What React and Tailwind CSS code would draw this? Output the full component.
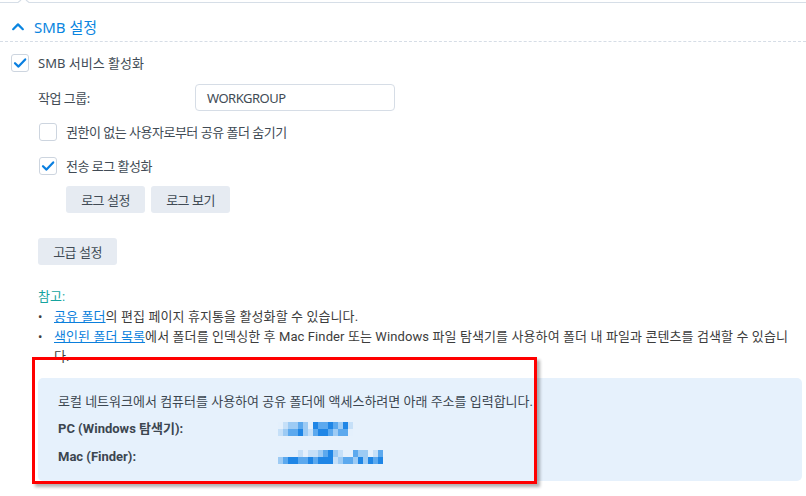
import React from 'react';

const shades = ['#e4f0fc', '#c6e0f8', '#9dcbf4', '#5ca9ee', '#1f86e6'];

// blurred address values, two rows of cells
const pcBlur = ['012232043343241', '123342134432330'];
const macBlur = ['000010112342100322013', '234433434441233242434'];

function Blur({ rows, cell = 5 }) {
  const w = rows[0].length * cell;
  return (
    <svg width={w} height={14} viewBox={`0 0 ${w} 14`}>
      {rows.map((r, y) =>
        r.split('').map((c, x) => (
          <rect key={`${y}-${x}`} x={x * cell} y={y * 7} width={cell} height={7} fill={shades[Number(c)]} />
        ))
      )}
    </svg>
  );
}

function Checkbox({ checked }) {
  return (
    <div className="w-[18px] h-[18px] rounded-[3px] border border-[#cdd5df] bg-white flex items-center justify-center shrink-0">
      {checked && (
        <svg width="14" height="14" viewBox="0 0 14 14">
          <path d="M2 7.2 L5.5 10.6 L12.2 3.4" fill="none" stroke="#0a7fe0" strokeWidth="2.2" strokeLinecap="round" strokeLinejoin="round" />
        </svg>
      )}
    </div>
  );
}

function GrayButton({ children }) {
  return (
    <button className="w-[79px] h-[27px] rounded-[3px] bg-[#e6ebf2] text-[13px] text-[#414b55] flex items-center justify-center">
      {children}
    </button>
  );
}

export default function App() {
  return (
    <div className="w-[806px] h-[496px] bg-white relative overflow-hidden font-['Noto_Sans','Noto_Sans_CJK_KR',sans-serif] text-[13px] leading-[18px] tracking-[-0.5px] text-[#414b55]">
      {/* tab pointer line */}
      <svg width="806" height="8" viewBox="0 0 806 8" className="block">
        <polyline points="0,2.5 18,2.5 21,0" fill="none" stroke="#d6dee7" strokeWidth="1.2" />
        <polyline points="26,0 29,2.5 806,2.5" fill="none" stroke="#d6dee7" strokeWidth="1.2" />
      </svg>

      {/* section header */}
      <div className="h-[34px] pt-[4px] flex items-center pl-[12px] gap-[10px] border-b border-dashed border-[#d6dde6]">
        <svg width="12" height="9" viewBox="0 0 12 9">
          <path d="M1.2 7.2 L6 2.4 L10.8 7.2" fill="none" stroke="#0a85e0" strokeWidth="2.2" strokeLinecap="round" strokeLinejoin="round" />
        </svg>
        <span className="text-[15px] tracking-[0px] text-[#0a85e0]">SMB 설정</span>
      </div>

      <div className="mt-[12px] pl-[11px] flex items-center gap-[9px]">
        <Checkbox checked />
        <span className="tracking-[0px]">SMB 서비스 활성화</span>
      </div>

      <div className="mt-[12px] pl-[38px] flex items-center">
        <span className="w-[157px]">작업 그룹:</span>
        <div className="w-[200px] h-[27px] rounded-[4px] border border-[#d6dde6] flex items-center px-[11px]">WORKGROUP</div>
      </div>

      <div className="mt-[12px] pl-[39px] flex items-center gap-[9px]">
        <Checkbox />
        <span>권한이 없는 사용자로부터 공유 폴더 숨기기</span>
      </div>

      <div className="mt-[16px] pl-[39px] flex items-center gap-[9px]">
        <Checkbox checked />
        <span>전송 로그 활성화</span>
      </div>

      <div className="mt-[11px] pl-[66px] flex gap-[6px]">
        <GrayButton>로그 설정</GrayButton>
        <GrayButton>로그 보기</GrayButton>
      </div>

      <div className="mt-[25px] pl-[38px] flex">
        <GrayButton>고급 설정</GrayButton>
      </div>

      {/* notes */}
      <div className="mt-[22px] pl-[38px] font-['Roboto','Noto_Sans_CJK_KR',sans-serif] tracking-[0.1px] leading-[20px] text-[#3c3c3c]">
        <div className="text-[#16a39e]">참고:</div>
        <div className="flex">
          <span className="w-[16px]">•</span>
          <span>
            <a className="text-[#0b7fdc] underline">공유 폴더</a>의 편집 페이지 휴지통을 활성화할 수 있습니다.
          </span>
        </div>
        <div className="flex">
          <span className="w-[16px] shrink-0">•</span>
          <span className="whitespace-nowrap">
            <a className="text-[#0b7fdc] underline">색인된 폴더 목록</a>에서 폴더를 인덱싱한 후 Mac Finder 또는 Windows 파일 탐색기를 사용하여 폴더 내 파일과 콘텐츠를 검색할 수 있습니
            <br />다.
          </span>
        </div>
      </div>

      {/* address panel */}
      <div className="mt-[11px] ml-[38px] w-[764px] h-[103px] rounded-[5px] bg-[#e6f1fc] px-[20px] pt-[10px] font-['Roboto','Noto_Sans_CJK_KR',sans-serif] tracking-[0px] text-[#3c4650]">
        <div className="h-[27.5px] flex items-center">로컬 네트워크에서 컴퓨터를 사용하여 공유 폴더에 액세스하려면 아래 주소를 입력합니다.</div>
        <div className="h-[27.5px] flex items-center font-bold">
          <span className="w-[220px]">PC (Windows 탐색기):</span>
          <Blur rows={pcBlur} />
        </div>
        <div className="h-[27.5px] flex items-center font-bold">
          <span className="w-[220px]">Mac (Finder):</span>
          <Blur rows={macBlur} />
        </div>
      </div>

      {/* red annotation box */}
      <div className="absolute left-[32px] top-[357px] w-[505px] h-[127px] border-[3px] border-[#ff0000] shadow-[3px_3px_3px_rgba(0,0,0,0.3)]" />
    </div>
  );
}
